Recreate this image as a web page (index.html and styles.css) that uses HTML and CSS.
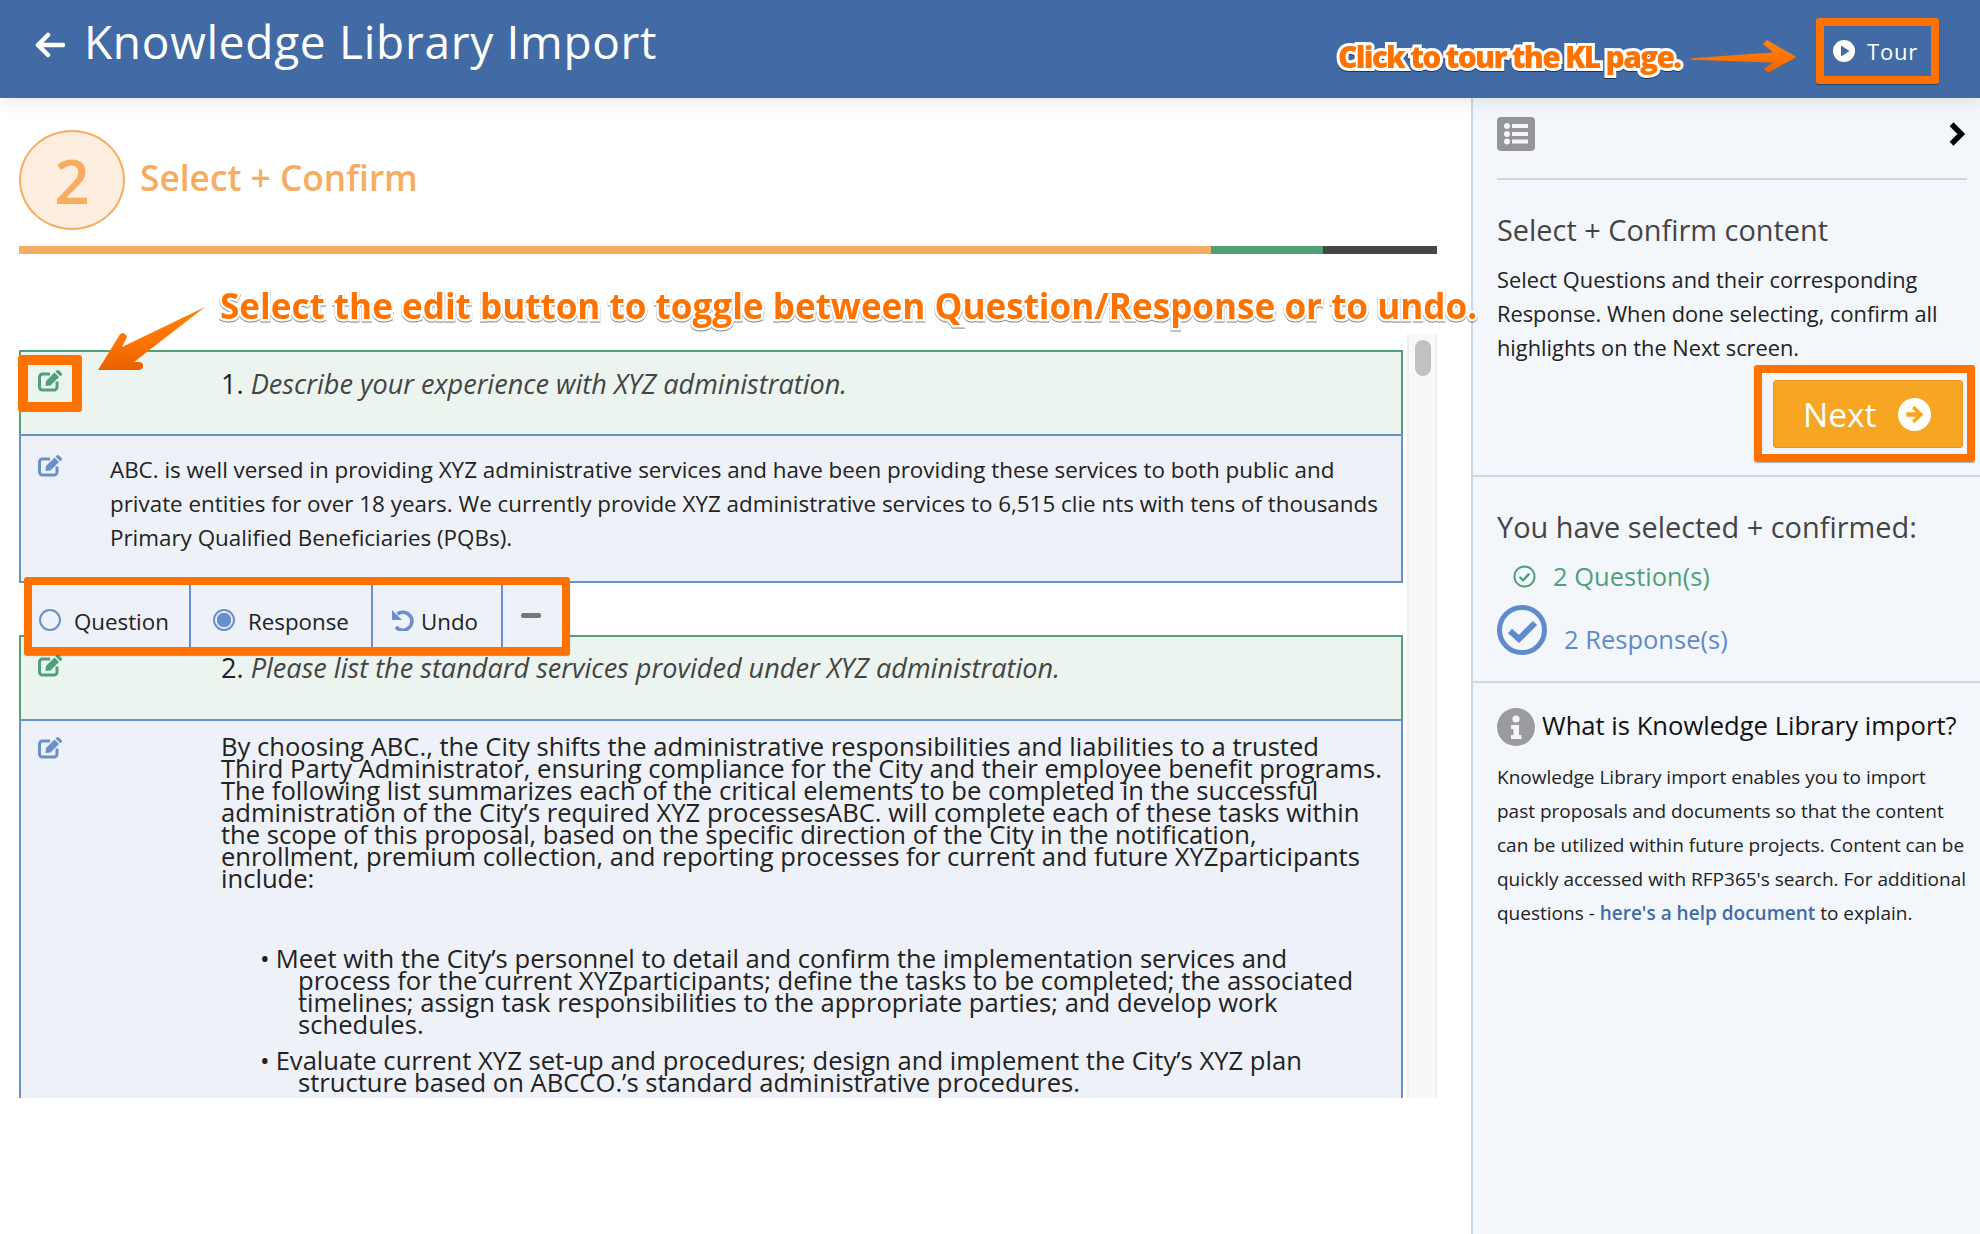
FILE: index.html
```html
<!DOCTYPE html>
<html lang="en">
<head>
<meta charset="utf-8">
<title>Knowledge Library Import</title>
<link rel="stylesheet" href="styles.css">
</head>
<body>
<div class="page">
  <header class="topbar">
    <div class="topbar-left">
      <svg class="back" viewBox="0 0 30 26"><path d="M13 3 3 13l10 10M3 13h25" fill="none" stroke="#fff" stroke-width="4.500" stroke-linecap="round" stroke-linejoin="round"/></svg>
      <h1 class="title">Knowledge Library Import</h1>
    </div>
    <div class="tour">
      <svg class="tour-icon" viewBox="0 0 22 22"><circle cx="11" cy="11" r="11" fill="#fff"/><path d="M8 5.500 16.500 11 8 16.500Z" fill="#426ba6"/></svg>
      <span class="tour-label">Tour</span>
    </div>
  </header>

  <div class="body">
    <main class="left">
      <div class="step">
        <div class="step-num">2</div>
        <div class="step-title">Select + Confirm</div>
      </div>
      <div class="progress">
        <div class="seg seg-a"></div>
        <div class="seg seg-b"></div>
        <div class="seg seg-c"></div>
      </div>
      <div class="scroll">
        <div class="doc">
          <section class="block q q1">
            <svg class="edit edit-hl" viewBox="0 0 25 23"><use href="#i-edit"/></svg>
            <div class="q-text"><span class="num">1.</span> <em>Describe your experience with XYZ administration.</em></div>
          </section>
          <section class="block r r1">
            <svg class="edit" viewBox="0 0 25 23"><use href="#i-edit"/></svg>
            <p class="r1-text">ABC. is well versed in providing XYZ administrative services and have been providing these services to both public and<br>private entities for over 18 years. We currently provide XYZ administrative services to 6,515 clie nts with tens of thousands<br>Primary Qualified Beneficiaries (PQBs).</p>
          </section>
          <section class="block q q2">
            <svg class="edit" viewBox="0 0 25 23"><use href="#i-edit"/></svg>
            <div class="q-text"><span class="num">2.</span> <em>Please list the standard services provided under XYZ administration.</em></div>
          </section>
          <section class="block r r2">
            <svg class="edit" viewBox="0 0 25 23"><use href="#i-edit"/></svg>
            <div class="r2-text">
              <p class="r2-intro">By choosing ABC., the City shifts the administrative responsibilities and liabilities to a trusted<br>Third Party Administrator, ensuring compliance for the City and their employee benefit programs.<br>The following list summarizes each of the critical elements to be completed in the successful<br>administration of the City’s required XYZ processesABC. will complete each of these tasks within<br>the scope of this proposal, based on the specific direction of the City in the notification,<br>enrollment, premium collection, and reporting processes for current and future XYZparticipants<br>include:</p>
              <ul class="bullets">
                <li>Meet with the City’s personnel to detail and confirm the implementation services and<br>process for the current XYZparticipants; define the tasks to be completed; the associated<br>timelines; assign task responsibilities to the appropriate parties; and develop work<br>schedules.</li>
                <li>Evaluate current XYZ set-up and procedures; design and implement the City’s XYZ plan<br>structure based on ABCCO.’s standard administrative procedures.</li>
              </ul>
            </div>
          </section>
          <div class="toolbar">
            <div class="tool tool-q"><span class="radio"></span><span>Question</span></div>
            <div class="tool tool-r"><span class="radio radio-on"></span><span>Response</span></div>
            <div class="tool tool-u">
              <svg class="undo" viewBox="0 0 22 22"><path d="M5.500 5A9 9 0 1 1 4 18" fill="none" stroke="#6a90cc" stroke-width="3.600"/><path d="M0 1V11H10Z" fill="#6a90cc"/></svg>
              <span>Undo</span>
            </div>
            <div class="tool tool-m"><span class="minus"></span></div>
          </div>
        </div>
        <div class="track"><div class="thumb"></div></div>
      </div>
    </main>

    <aside class="side">
      <div class="side-sec side-top">
        <div class="side-icons">
          <svg class="list-icon" viewBox="0 0 38 34"><rect width="38" height="34" rx="4" fill="#959497"/><g fill="#f3f7fb"><circle cx="10" cy="9" r="3"/><circle cx="10" cy="17" r="3"/><circle cx="10" cy="24.500" r="3"/><rect x="15" y="7" width="16" height="4"/><rect x="15" y="15" width="16" height="4"/><rect x="15" y="22.500" width="16" height="4"/></g></svg>
          <svg class="chev" viewBox="0 0 16 24"><path d="M3 3l9 9-9 9" fill="none" stroke="#000" stroke-width="5"/></svg>
        </div>
        <h2 class="side-h">Select + Confirm content</h2>
        <p class="side-p">Select Questions and their corresponding<br>Response. When done selecting, confirm all<br>highlights on the Next screen.</p>
        <div class="next-row">
          <div class="next-hl">
            <div class="next">
              <span>Next</span>
              <svg class="next-icon" viewBox="0 0 32 32"><circle cx="16" cy="16" r="16" fill="#fff"/><path d="M16 7.500 24.500 16 16 24.500 13.500 22l3.800-3.800H8v-4.400h9.300L13.500 10Z" fill="#f6a623"/></svg>
            </div>
          </div>
        </div>
      </div>
      <div class="side-sec side-mid">
        <h2 class="side-h2">You have selected + confirmed:</h2>
        <div class="stat stat-q">
          <svg class="chk-q" viewBox="0 0 24 24"><circle cx="12" cy="12" r="10.500" fill="none" stroke="#4fa076" stroke-width="2"/><path d="M7 12.500l3.500 3.500L17 9" fill="none" stroke="#4fa076" stroke-width="2.500"/></svg>
          <span>2 Question(s)</span>
        </div>
        <div class="stat stat-r">
          <svg class="chk-r" viewBox="0 0 50 50"><circle cx="25" cy="25" r="22.500" fill="none" stroke="#5f8acb" stroke-width="5"/><path d="M13 26l9 8 16-16" fill="none" stroke="#5f8acb" stroke-width="6"/></svg>
          <span>2 Response(s)</span>
        </div>
      </div>
      <div class="side-sec side-info">
        <div class="info-head">
          <svg class="info-icon" viewBox="0 0 38 38"><circle cx="19" cy="19" r="19" fill="#9b9a9d"/><circle cx="19" cy="11" r="3.600" fill="#f3f7fb"/><path d="M14 17h8v10h2.500v4H14v-4h2.500v-6H14Z" fill="#f3f7fb"/></svg>
          <h3 class="info-h">What is Knowledge Library import?</h3>
        </div>
        <p class="info-p">Knowledge Library import enables you to import<br>past proposals and documents so that the content<br>can be utilized within future projects. Content can be<br>quickly accessed with RFP365's search. For additional<br>questions - <a class="help" href="#">here's a help document</a> to explain.</p>
      </div>
    </aside>
  </div>

  <div class="note note-tour">Click to tour the KL page.</div>
  <svg class="arrow arrow-tour" viewBox="0 0 106 36"><defs><linearGradient id="ag" x1="0" y1="0" x2="0" y2="1"><stop offset="0" stop-color="#ff8208"/><stop offset=".6" stop-color="#ff7200"/><stop offset="1" stop-color="#e86000"/></linearGradient></defs><path d="M1 21 84 15 73 6 76 3 104 19 77 34 74 31 85 24Z" fill="url(#ag)" stroke="url(#ag)" stroke-width="1.500" stroke-linejoin="round"/></svg>
  <div class="tour-hl"></div>

  <div class="note note-edit">Select the edit button to toggle between Question/Response or to undo.</div>
  <svg class="arrow arrow-edit" viewBox="0 0 110 66"><path d="M108 1 25 41 30 31C28 26 24 26 22 30L1 64H42C47 64 48 56 42 56H37Z" fill="url(#ag)"/></svg>
  <div class="edit-box"></div>
</div>

<svg class="defs" width="0" height="0">
  <symbol id="i-edit" viewBox="0 0 25 23">
    <path d="M19 12.500V18a3 3 0 0 1-3 3H4.500a3 3 0 0 1-3-3V8a3 3 0 0 1 3-3H12" fill="none" stroke="currentColor" stroke-width="3"/>
    <path d="M7.500 17 8 12 16.500 3.500 21 8 12.500 16.500Z" fill="currentColor"/>
    <path d="M17.500 2.500 18.500 1.500A1.800 1.800 0 0 1 21 1.500L23.500 4A1.800 1.800 0 0 1 23.500 6.500L22 7Z" fill="currentColor"/>
  </symbol>
</svg>
</body>
</html>
```
FILE: styles.css
```css
* { box-sizing: border-box; }
html, body { margin: 0; padding: 0; }
body { font-family: "Open Sans", sans-serif; background: #fff; color: #222; }
h1, h2, h3, p, ul { margin: 0; padding: 0; font-weight: 400; }
.defs { position: absolute; }

.page { position: relative; width: 1980px; height: 1234px; overflow: hidden; display: flex; flex-direction: column; }

/* Header */
.topbar { height: 98px; flex: none; background: #426ba6; display: flex; justify-content: space-between; padding: 0 41px 0 35px; position: relative; z-index: 2; box-shadow: 0 3px 18px rgba(0,0,0,.1); }
.topbar-left { display: flex; align-items: center; height: 84px; }
.back { width: 30px; height: 26px; margin-right: 19px; margin-top: 5px; }
.title { font-size: 46px; color: #fff; letter-spacing: 0.7px; line-height: 1; margin-top: -2px; font-weight: 500; }
.tour { display: flex; align-items: center; padding-left: 17px; width: 123px; height: 66px; margin-top: 18px; color: #fff; }
.tour-icon { width: 22px; height: 22px; margin-right: 12px; }
.tour-label { font-size: 22px; letter-spacing: .8px; }
.tour-hl { position: absolute; z-index: 3; left: 1816px; top: 18px; width: 123px; height: 66px; border: 8px solid #ff7200; border-radius: 3px; box-shadow: 0 1px 1px rgba(0,0,0,.4); }

.body { flex: 1; display: flex; min-height: 0; }

/* Left */
.left { width: 1471px; flex: none; padding: 32px 0 0 19px; }
.step { display: flex; align-items: center; height: 100px; }
.step-num { width: 106px; height: 100px; border: 2px solid #f6ad62; border-radius: 50%; background: #feeedf; color: #f6ad62; font-size: 62px; font-weight: 600; display: flex; align-items: center; justify-content: center; line-height: 1; }
.step-title { color: #f6ad62; font-size: 35.300px; font-weight: 600; margin: -6px 0 0 15px; }
.progress { display: flex; width: 1418px; height: 8px; margin-top: 16px; }
.seg-a { width: 1192px; background: #f6ad62; }
.seg-b { width: 112px; background: #4fa076; }
.seg-c { width: 114px; background: #454545; }

.scroll { display: flex; width: 1418px; height: 764px; margin-top: 80px; overflow: hidden; }
.doc { position: relative; width: 1384px; flex: none; padding-top: 16px; }
.track { width: 30px; margin-left: 4px; flex: none; background: #f8f8f8; border-left: 2px solid #eee; border-right: 2px solid #eee; padding: 6px 6px 0; }
.thumb { width: 16px; height: 36px; border-radius: 8px; background: #c1c1c1; }

.block { position: relative; border: 2px solid; }
.q { height: 84px; background: #ebf4ef; border-color: #4fa076; border-bottom: 0; color: #4fa076; }
.r { background: #eef1f7; border-color: #6a90cc; color: #6a90cc; }
.edit { position: absolute; left: 17px; width: 25px; height: 23px; }
.q1 .edit { top: 17px; }
.r1 .edit { top: 18px; }
.q2 .edit { top: 17px; }
.r2 .edit { top: 15px; }
.q-text { position: absolute; left: 200px; font-size: 27.100px; line-height: 34px; color: #444; white-space: nowrap; }
.q1 .q-text { top: 15px; }
.q2 .q-text { top: 14px; }
.num { color: #222; }
.r1 { height: 149px; padding: 17px 0 0 89px; }
.r1-text { font-size: 22.400px; line-height: 34px; color: #222; white-space: nowrap; }
.q2 { margin-top: 52px; }
.r2 { height: 500px; padding: 15px 0 0 200px; }
.r2-text { font-size: 25.600px; line-height: 22px; color: #222; white-space: nowrap; }
.bullets { list-style: none; margin-top: 58px; }
.bullets li { position: relative; padding-left: 77px; text-indent: -38px; margin-bottom: 14px; }
.bullets li::before { content: "•"; margin-right: 6px; }

/* Floating toolbar */
.toolbar { position: absolute; left: 5px; top: 243px; width: 546px; height: 78px; display: flex; background: #eef1f7; border: 8px solid #ff7200; border-radius: 3px; box-shadow: 0 1px 1px rgba(0,0,0,.4); font-size: 22.300px; color: #222; }
.tool { display: flex; align-items: center; border-right: 2px solid #6a90cc; height: 100%; padding-top: 11px; }
.tool-q { width: 159px; padding-left: 7px; }
.tool-r { width: 182px; padding-left: 22px; }
.tool-u { width: 130px; padding-left: 19px; }
.tool-m { flex: 1; border-right: 0; padding-left: 18px; }
.radio { width: 22px; height: 22px; border-radius: 50%; border: 2px solid #6a90cc; margin-right: 13px; margin-top: -4px; }
.radio-on { background: radial-gradient(circle, #6a90cc 0 7px, transparent 7.500px); }
.undo { width: 22px; height: 22px; margin-right: 7px; margin-top: -4px; }
.minus { width: 20px; height: 5px; background: #777; border-radius: 2px; margin-top: -12px; }

/* Sidebar */
.side { flex: 1; background: #f3f7fb; border-left: 2px solid #c9d9e8; }
.side-sec { border-bottom: 2px solid #c9d9e8; padding-left: 24px; }
.side-top { height: 379px; padding-top: 19px; padding-right: 13px; }
.side-icons { display: flex; justify-content: space-between; height: 63px; padding-bottom: 19px; border-bottom: 2px solid #c9d9e8; align-items: flex-start; }
.list-icon { width: 38px; height: 34px; }
.chev { width: 18px; height: 26px; margin: 4px 1px 0 0; }
.side-h { font-size: 28.900px; color: #444; margin-top: 31px; line-height: 38px; }
.side-p { font-size: 21.800px; line-height: 34px; color: #222; margin-top: 14px; white-space: nowrap; }
.next-row { display: flex; justify-content: flex-end; margin-right: -8px; }
.next-hl { width: 221px; height: 97px; border: 8px solid #ff7200; border-radius: 3px; padding: 7px 4px 0 11px; box-shadow: 0 1px 1px rgba(0,0,0,.3); }
.next { width: 190px; height: 68px; background: #f6a623; border: 1px solid #f09020; border-radius: 3px; color: #fff; font-size: 33.500px; display: flex; align-items: center; justify-content: space-between; padding: 0 31px 0 29px; }
.next-icon { width: 33px; height: 33px; }

.side-mid { height: 206px; padding-top: 30px; }
.side-h2 { font-size: 28.900px; color: #444; line-height: 40px; }
.stat { display: flex; font-size: 25.500px; align-items: center; white-space: nowrap; }
.stat-q { color: #4fa076; margin-top: 9px; padding-left: 16px; height: 40px; }
.chk-q { width: 23px; height: 23px; margin-right: 17px; }
.stat-r { color: #5f8acb; margin-top: 9px; height: 50px; align-items: flex-start; }
.stat-r span { margin-top: 17px; }
.chk-r { width: 50px; height: 50px; margin-right: 17px; }

.side-info { border-bottom: 0; padding-top: 25px; }
.info-head { display: flex; align-items: center; height: 38px; }
.info-icon { width: 38px; height: 38px; margin-right: 7px; }
.info-h { font-size: 25.600px; color: #111; white-space: nowrap; margin-top: -3px; }
.info-p { font-size: 19px; line-height: 34px; color: #222; margin-top: 14px; white-space: nowrap; }
.help { color: #426ba6; font-weight: 600; text-decoration: none; }

/* Annotations */
.note { position: absolute; z-index: 3; color: #ff7200; white-space: nowrap; paint-order: stroke fill; -webkit-text-stroke-color: #fff; filter: drop-shadow(0 1px .6px rgba(0,0,0,.5)); }
.note-edit { left: 220px; top: 283px; font-size: 35.100px; line-height: 44px; font-weight: 700; -webkit-text-stroke-width: 5px; }
.note-tour { left: 1338px; top: 38px; font-size: 30px; line-height: 38px; font-weight: 800; letter-spacing: -1.750px; -webkit-text-stroke-width: 6px; }
.arrow { position: absolute; z-index: 3; overflow: visible; }
.arrow-tour { left: 1691px; top: 38px; width: 106px; height: 36px; }
.arrow-edit { left: 97px; top: 306px; width: 110px; height: 66px; }
.edit-box { position: absolute; z-index: 3; left: 18px; top: 355px; width: 64px; height: 57px; border: 10px solid #ff7200; border-radius: 3px; }
```
